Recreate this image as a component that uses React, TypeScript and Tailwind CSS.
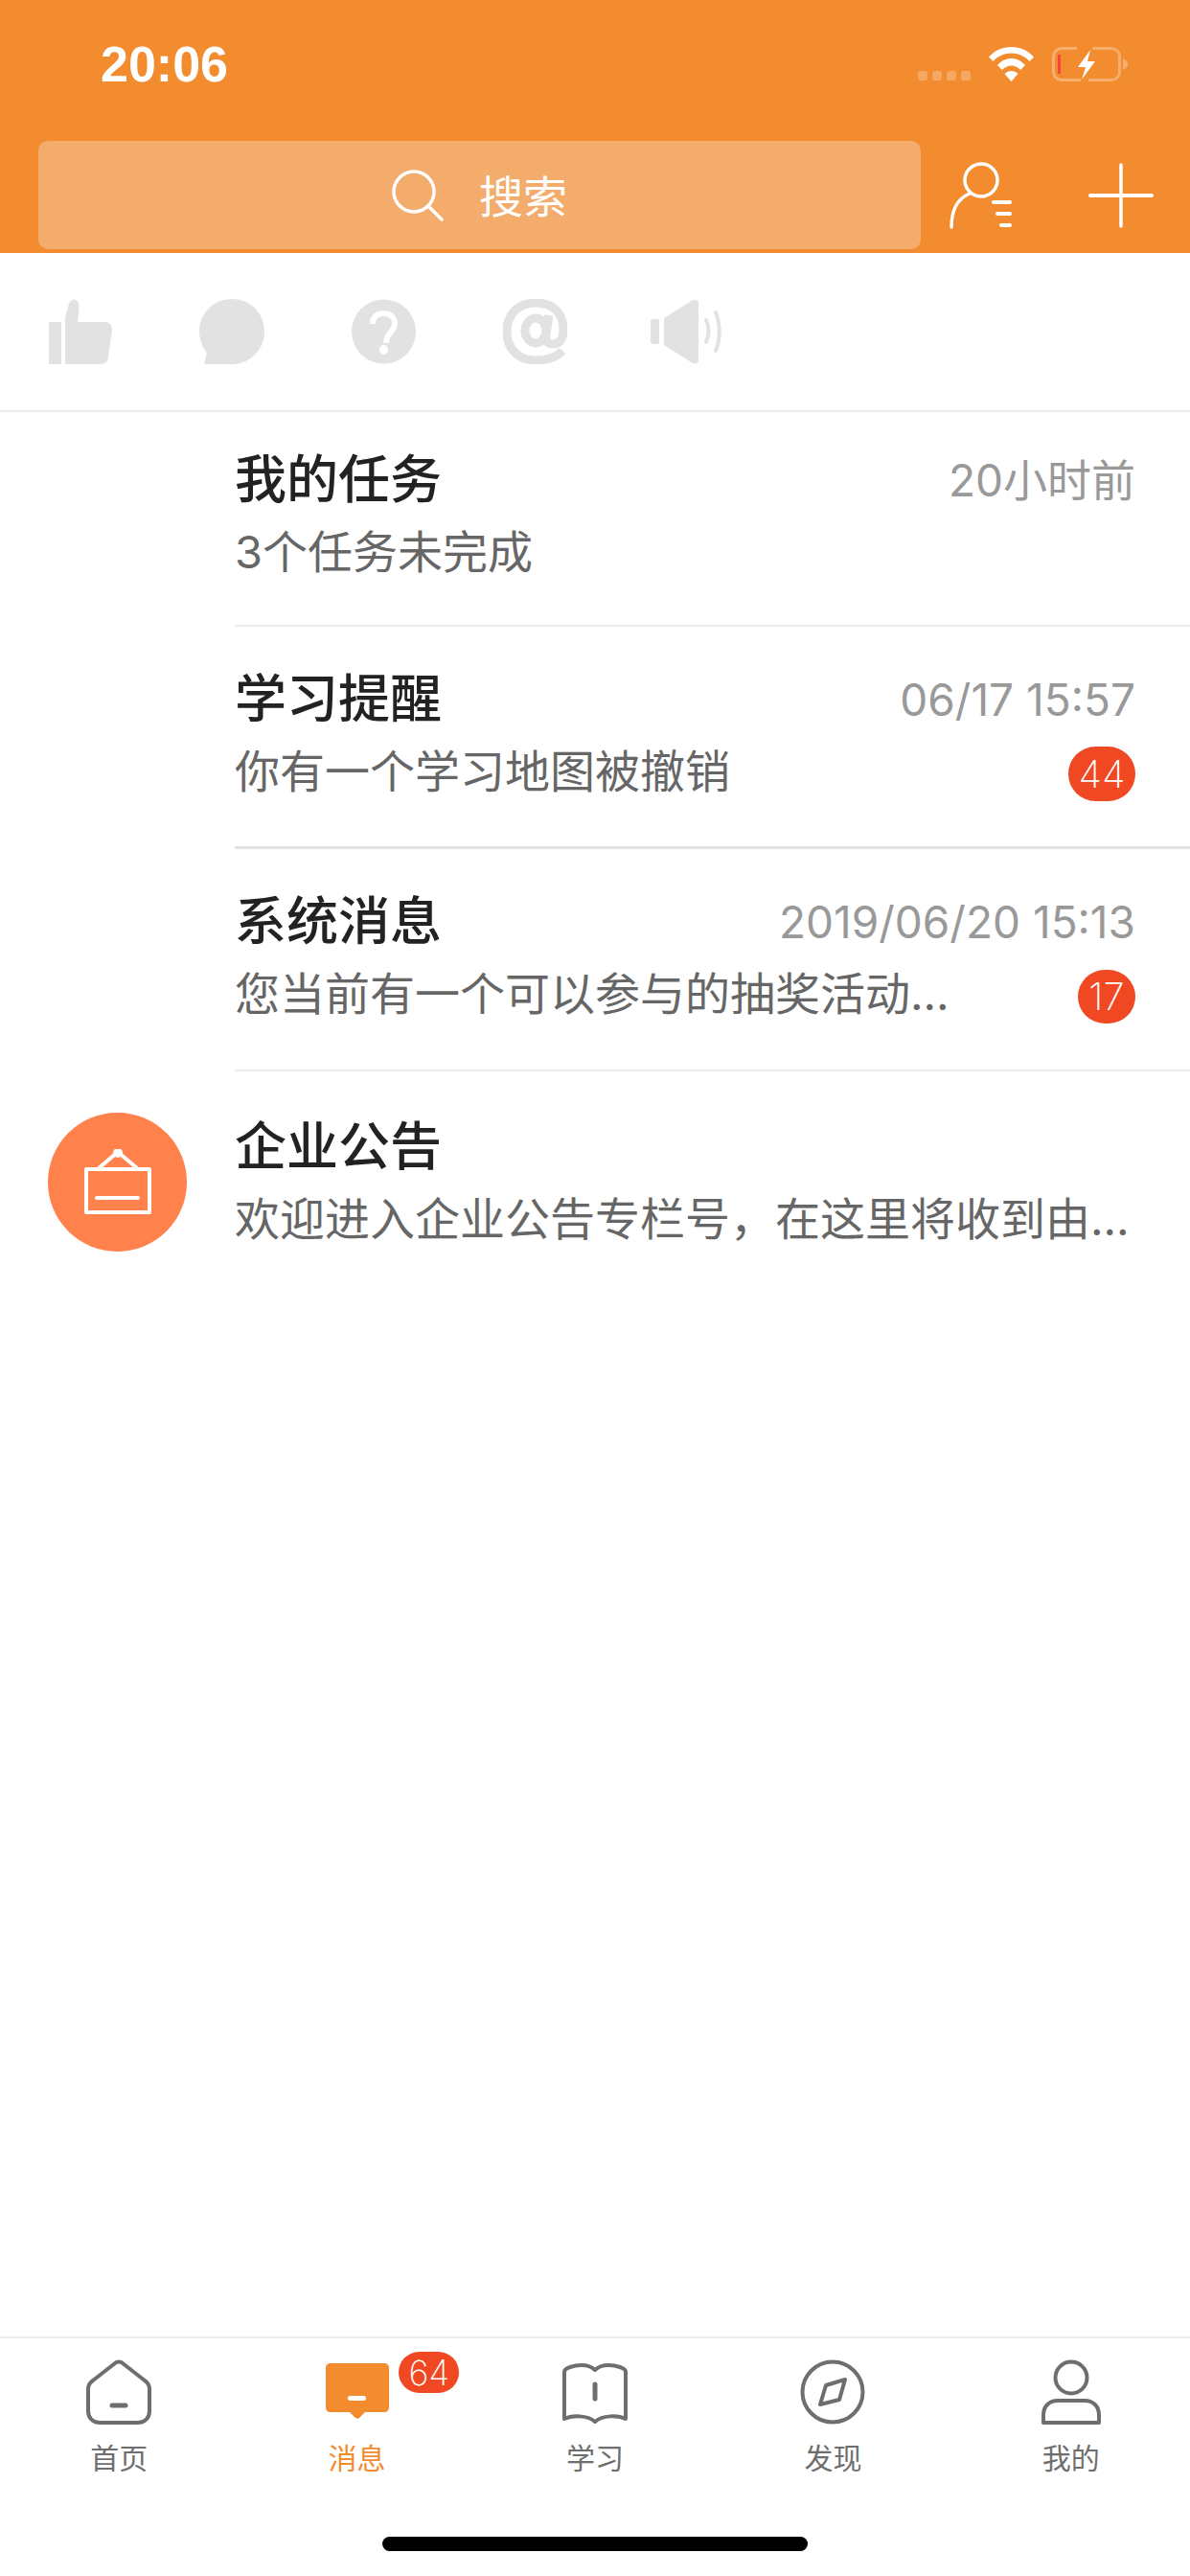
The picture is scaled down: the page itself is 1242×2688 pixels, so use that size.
import React from "react";

const font = "font-['Inter','Noto_Sans_CJK_SC',sans-serif]";

function SearchIcon() {
  return (
    <svg width="54" height="54" viewBox="0 0 54 54" fill="none" stroke="white" strokeWidth="3.5" strokeLinecap="round">
      <circle cx="23" cy="23" r="21" />
      <path d="M39 39l13 13" />
    </svg>
  );
}

function PersonListIcon() {
  return (
    <svg width="70" height="70" viewBox="0 0 70 70" fill="none" stroke="white" strokeWidth="3.5" strokeLinecap="round">
      <circle cx="33" cy="19" r="17" />
      <path d="M21 33C9 38 2 50 2 68" />
      <path d="M46 42h17M50 54h13M54 66h9" strokeWidth="4" />
    </svg>
  );
}

function PlusIcon() {
  return (
    <svg width="68" height="68" viewBox="0 0 68 68" fill="none" stroke="white" strokeLinecap="round">
      <path d="M34 2v64" strokeWidth="3.5" />
      <path d="M2 34h64" strokeWidth="4" />
    </svg>
  );
}

function StatusIcons() {
  return (
    <div className="flex items-end">
      <div className="flex gap-[5px] pb-[1px]">
        {[0, 1, 2, 3].map((i) => (
          <span key={i} className="size-[10px] rounded-[3px] bg-white/25" />
        ))}
      </div>
      <svg className="ml-[19px]" width="47" height="36" viewBox="0 0 47 36" fill="white">
        <path d="M23.5 0C33 0 41 4 47 10.500L42.500 15C37.500 9.500 31 6.500 23.500 6.500S9.500 9.500 4.500 15L0 10.500C6 4 14 0 23.500 0Z" />
        <path d="M23.500 12C29 12 34 14.500 38 19L33 24C30.500 21 27 19.500 23.500 19.500S16.500 21 14 24L9 19C13 14.500 18 12 23.500 12Z" />
        <path d="M23.500 25C26 25 28.500 26 30.500 28L23.500 36L16.500 28C18.500 26 21 25 23.500 25Z" />
      </svg>
      <svg className="ml-[19px]" width="79" height="36" viewBox="0 0 79 36" fill="none">
        <path d="M26 1.500H10A8.500 8.500 0 0 0 1.500 10V26A8.500 8.500 0 0 0 10 34.500H30" stroke="white" strokeOpacity=".3" strokeWidth="3" />
        <path d="M42 1.500H62A8.500 8.500 0 0 1 70.500 10V26A8.500 8.500 0 0 1 62 34.500H38" stroke="white" strokeOpacity=".3" strokeWidth="3" />
        <path d="M74 12c3 1 5 3 5 6s-2 5-5 6Z" fill="white" fillOpacity=".3" />
        <rect x="6" y="8" width="3" height="20" fill="#f9463c" />
        <path d="M40 3L27 21H35L31 34L45 15H37Z" fill="white" />
      </svg>
    </div>
  );
}

function Header() {
  return (
    <header className="h-[264px] bg-[#f38b2f]">
      <div className="flex h-[147px] items-start pl-[105px] pr-[65px]">
        <span className="mt-[39px] font-['Liberation_Sans',sans-serif] text-[52px] leading-[56px] font-bold text-white">20:06</span>
        <div className="mt-[49px] ml-auto">
          <StatusIcons />
        </div>
      </div>
      <div className="flex h-[113px] items-center pl-[40px]">
        <div className="flex h-full w-[921px] items-center justify-center gap-[37px] rounded-[10px] bg-[#f3ac6b]">
          <SearchIcon />
          <span className="mt-[2px] text-[46px] leading-none text-white">搜索</span>
        </div>
        <div className="ml-[30px]">
          <PersonListIcon />
        </div>
        <div className="ml-[75px]">
          <PlusIcon />
        </div>
      </div>
    </header>
  );
}

function Categories() {
  return (
    <div className="flex h-[166px] items-center border-b-2 border-[#ececec] pl-[5px]">
      <div className="flex w-[158px] justify-center">
        <svg width="66" height="68" viewBox="0 0 66 68" fill="#e2e2e2">
          <rect x="0" y="24" width="13" height="44" />
          <path d="M17 20L21 5C23 -1 29 -1 31 5C32 9 31 15 30 24H58C63 24 66 27 66 32L62 60C62 65 59 68 54 68H17Z" />
        </svg>
      </div>
      <div className="flex w-[158px] justify-center">
        <svg width="68" height="68" viewBox="0 0 68 68" fill="#e2e2e2">
          <path d="M34 0C53 0 68 15 68 34S53 68 34 68H5L8 56C3 50 0 42 0 34C0 15 15 0 34 0Z" />
        </svg>
      </div>
      <div className="flex w-[158px] justify-center">
        <svg width="67" height="68" viewBox="0 0 67 68">
          <circle cx="33.500" cy="34" r="33.500" fill="#e2e2e2" />
          <path d="M22 26C22 18 27 15 33.500 15S45 19 45 26C45 34 36 35 36 46" fill="none" stroke="white" strokeWidth="6" strokeLinecap="butt" />
          <ellipse cx="33.500" cy="53" rx="4.500" ry="5" fill="white" />
        </svg>
      </div>
      <div className="flex w-[158px] justify-center">
        <svg width="67" height="68" viewBox="0 0 67 68" fill="none" stroke="#e2e2e2" strokeWidth="9">
          <path d="M62 54C56 61 47 64 34 64C16 64 4 52 4 34S16 4 34 4C51 4 63 14 63 32C63 42 59 47 52 47C46 47 44 43 45 37L48 17" />
          <ellipse cx="34" cy="33" rx="11" ry="13" />
        </svg>
      </div>
      <div className="flex w-[158px] justify-center pl-[2px]">
        <svg width="77" height="68" viewBox="0 0 77 68" fill="#e2e2e2">
          <rect x="0" y="21" width="9" height="26" rx="2" />
          <path d="M14 20L44 1C47 0 50 1 50 4V64C50 67 47 68 44 67L14 48Z" />
          <path d="M58 22C61 29 61 38 58 45" fill="none" stroke="#e2e2e2" strokeWidth="4" strokeLinecap="round" />
          <path d="M68 14C73 26 73 42 68 54" fill="none" stroke="#e2e2e2" strokeWidth="4" strokeLinecap="round" />
        </svg>
      </div>
    </div>
  );
}

type Message = {
  title: string;
  sub: string;
  time?: string;
  badge?: string;
  badgeClass?: string;
  height: string;
  pad: string;
  border: string;
  avatar?: boolean;
};

const messages: Message[] = [
  { title: "我的任务", sub: "3个任务未完成", time: "20小时前", height: "h-[224px]", pad: "pt-[40px]", border: "border-b-2 border-[#ececec]" },
  { title: "学习提醒", sub: "你有一个学习地图被撤销", time: "06/17 15:57", badge: "44", badgeClass: "w-[70px] h-[57px]", height: "h-[232px]", pad: "pt-[45px]", border: "border-b-[3px] border-[#e2e2e2]" },
  { title: "系统消息", sub: "您当前有一个可以参与的抽奖活动...", time: "2019/06/20 15:13", badge: "17", badgeClass: "w-[60px] h-[56px]", height: "h-[232px]", pad: "pt-[45px]", border: "border-b-2 border-[#ececec]" },
  { title: "企业公告", sub: "欢迎进入企业公告专栏号，在这里将收到由...", height: "h-[232px]", pad: "pt-[48px]", border: "", avatar: true },
];

function MessageRow({ m }: { m: Message }) {
  return (
    <div className={`flex ${m.height}`}>
      <div className="w-[245px] shrink-0 pl-[50px] pt-[43px]">
        {m.avatar && (
          <div className="flex size-[145px] items-center justify-center rounded-full bg-[#ff814c]">
            <svg width="70" height="70" viewBox="0 0 70 70" fill="none" stroke="white" strokeWidth="4" strokeLinejoin="round" strokeLinecap="round">
              <rect x="2" y="21" width="66" height="45" />
              <path d="M15 20L35 3L55 20" />
              <circle cx="35" cy="4" r="3" fill="white" />
              <path d="M13 51H56" />
            </svg>
          </div>
        )}
      </div>
      <div className={`min-w-0 flex-1 pr-[57px] ${m.pad} ${m.border}`}>
        <div className="flex h-[62px] items-center justify-between">
          <span className="text-[54px] leading-none font-medium text-[#222]">{m.title}</span>
          {m.time && <span className="text-[46px] leading-none font-normal text-[#999]">{m.time}</span>}
        </div>
        <div className="mt-[12px] flex h-[62px] items-center justify-between">
          <span className="text-[47px] leading-none whitespace-nowrap text-[#666]">{m.sub}</span>
          {m.badge && (
            <span className={`mt-[7px] flex items-center justify-center rounded-full bg-[#f04822] text-[40px] leading-none font-[250] text-white ${m.badgeClass}`}>
              {m.badge}
            </span>
          )}
        </div>
      </div>
    </div>
  );
}

const stroke = { fill: "none", stroke: "#6e6e6e", strokeWidth: 4, strokeLinecap: "round", strokeLinejoin: "round" } as const;

const tabs: { label: string; active?: boolean; icon: React.ReactNode }[] = [
  {
    label: "首页",
    icon: (
      <svg width="68" height="68" viewBox="0 0 68 68" {...stroke}>
        <path d="M30 4C32 2 36 2 38 4L61 22C64 24 66 27 66 31V54C66 61 61 66 54 66H14C7 66 2 61 2 54V31C2 27 4 24 7 22Z" />
        <path d="M27 48H41" strokeWidth="5" />
      </svg>
    ),
  },
  {
    label: "消息",
    active: true,
    icon: (
      <svg width="68" height="68" viewBox="0 0 68 68">
        <path d="M6 4H62C65 4 67 6 67 9V50C67 53 65 55 62 55H42L36 61C35 62 33 62 32 61L26 55H6C3 55 1 53 1 50V9C1 6 3 4 6 4Z" fill="#f38b2f" />
        <rect x="24" y="38" width="19" height="5" rx="2.500" fill="white" />
      </svg>
    ),
  },
  {
    label: "学习",
    icon: (
      <svg width="68" height="68" viewBox="0 0 68 68" {...stroke}>
        <path d="M2 13C2 9 12 6 20 6C26 6 31 8 34 11C37 8 42 6 48 6C56 6 66 9 66 13V62C58 58 42 58 34 65C26 58 10 58 2 62Z" />
        <path d="M34 26V41" strokeWidth="5" />
      </svg>
    ),
  },
  {
    label: "发现",
    icon: (
      <svg width="68" height="68" viewBox="0 0 68 68" {...stroke}>
        <circle cx="34" cy="34" r="31.500" />
        <path d="M47 21L41 42L21 47L27 27Z" />
      </svg>
    ),
  },
  {
    label: "我的",
    icon: (
      <svg width="62" height="68" viewBox="0 0 62 68" {...stroke}>
        <circle cx="31" cy="19" r="16.500" />
        <path d="M2 66V58C2 48 9 43 17 43H45C53 43 60 48 60 58V66Z" />
      </svg>
    ),
  },
];

function TabBar() {
  return (
    <nav className="border-t-2 border-[#ececec]">
      <div className="grid h-[207px] grid-cols-5">
        {tabs.map((t) => (
          <div key={t.label} className="relative flex flex-col items-center pt-[22px]">
            <div className="flex h-[68px] items-center justify-center">{t.icon}</div>
            <span className={`mt-[18px] text-[30px] leading-[34px] ${t.active ? "text-[#f38b2f]" : "text-[#6e6e6e]"}`}>{t.label}</span>
            {t.active && (
              <span className="absolute top-[14px] left-[168px] flex h-[43px] w-[63px] items-center justify-center rounded-full bg-[#f04822] text-[36px] leading-none font-[250] text-white">
                64
              </span>
            )}
          </div>
        ))}
      </div>
      <div className="h-[41px]">
        <div className="mx-auto h-[15px] w-[444px] rounded-full bg-black" />
      </div>
    </nav>
  );
}

export default function App() {
  return (
    <div className={`flex h-[2688px] w-[1242px] flex-col bg-white ${font}`}>
      <Header />
      <Categories />
      <main className="flex-1">
        {messages.map((m) => (
          <MessageRow key={m.title} m={m} />
        ))}
      </main>
      <TabBar />
    </div>
  );
}
